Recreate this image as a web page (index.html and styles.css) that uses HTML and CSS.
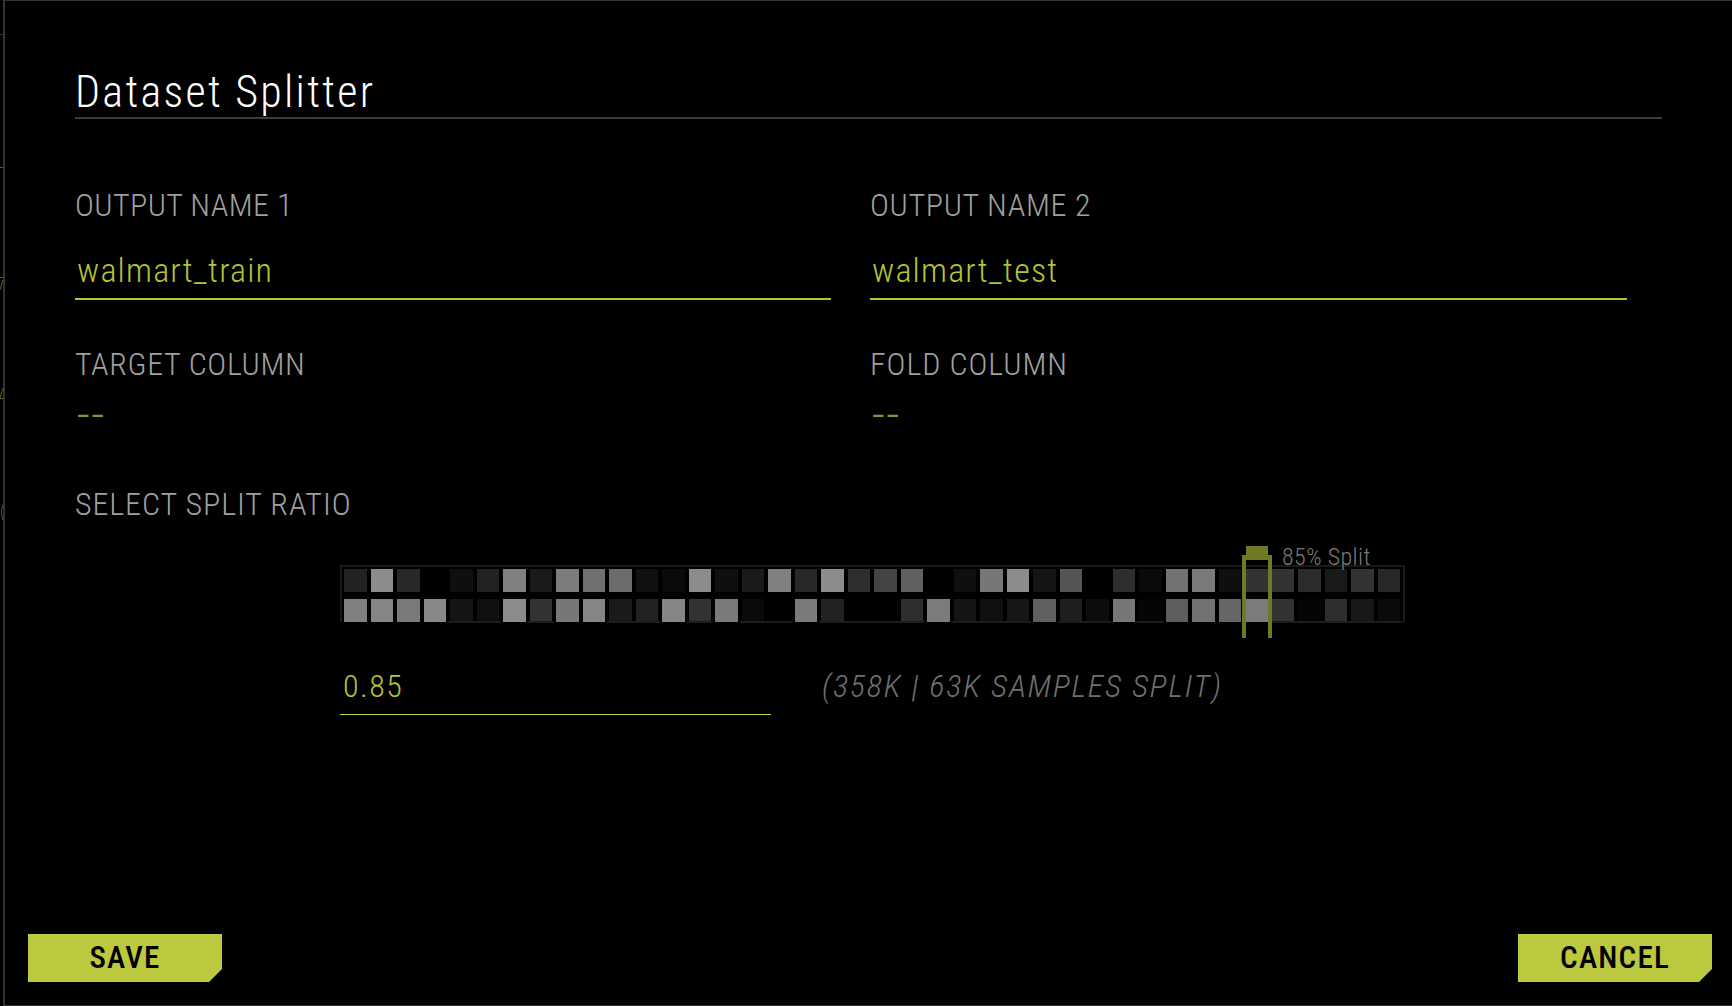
FILE: index.html
```html
<!DOCTYPE html>
<html lang="en">
<head>
<meta charset="utf-8">
<title>Dataset Splitter</title>
<link rel="stylesheet" href="styles.css">
</head>
<body>
<svg class="sliver" width="3" height="530" viewBox="0 0 3 530" aria-hidden="true">
  <path class="sliver-grey" d="M0 34.5H3"/>
  <path class="sliver-olive" d="M0 167.5H3M0 277.5H3M0 290L3 280M0 398.5H3M0 398L3 388M3 505C1 510 1 515 3 520"/>
</svg>
<main class="modal">
  <h1 class="title">Dataset Splitter</h1>
  <div class="fields">
    <div class="field">
      <div class="label label-tight">OUTPUT NAME 1</div>
      <div class="value underlined">walmart_train</div>
    </div>
    <div class="field">
      <div class="label">OUTPUT NAME 2</div>
      <div class="value underlined">walmart_test</div>
    </div>
    <div class="field">
      <div class="label">TARGET COLUMN</div>
      <div class="value dim">--</div>
    </div>
    <div class="field">
      <div class="label label-wide">FOLD COLUMN</div>
      <div class="value dim">--</div>
    </div>
  </div>
  <div class="label label-wide ratio-label">SELECT SPLIT RATIO</div>
  <section class="splitter">
    <div class="heat">
      <div class="heat-row" id="r1"></div>
      <div class="heat-row" id="r2"></div>
      <div class="handle"><span class="knob"></span></div>
      <span class="split-tag">85% Split</span>
    </div>
    <div class="ratio-row">
      <div class="ratio-input">0.85</div>
      <div class="samples">(358K | 63K SAMPLES SPLIT)</div>
    </div>
  </section>
  <footer class="actions">
    <button class="btn">SAVE</button>
    <button class="btn">CANCEL</button>
  </footer>
</main>
<script src="app.js"></script>
</body>
</html>
```
FILE: styles.css
```css
* { box-sizing: border-box; }
html, body { margin: 0; height: 100%; background: #000; }
body { font-family: Roboto, "Liberation Sans", sans-serif; font-stretch: 75%; overflow: hidden; }
.sliver { position: absolute; left: 0; top: 0; }
.sliver path { fill: none; stroke-width: 1; }
.sliver-grey { stroke: #333; }
.sliver-olive { stroke: #5a6320; }
.modal {
  height: 1006px;
  margin-left: 3px;
  border: solid #333;
  border-width: 1px 0 1px 2px;
  padding: 0 0 23px 23px;
  display: flex;
  flex-direction: column;
}
.title {
  margin: 0 70px 0 47px;
  height: 118px;
  padding-top: 66px;
  border-bottom: 2px solid #3c3c3c;
  font-size: 44px;
  line-height: 50px;
  font-weight: 300;
  letter-spacing: 2.3px;
  color: #fff;
}
.fields {
  margin: 0 0 0 47px;
  padding-top: 67px;
  width: 1552px;
  display: grid;
  grid-template-columns: 756px 757px;
  column-gap: 39px;
}
.field { min-height: 159px; }
.label {
  font-size: 32px;
  line-height: 38px;
  font-weight: 300;
  letter-spacing: 0.65px;
  color: #a0a0a0;
}
.label-tight { letter-spacing: 0.4px; }
.label-wide { letter-spacing: 0.92px; }
.value {
  margin-top: 24px;
  height: 52px;
  padding-left: 2px;
  font-size: 34px;
  line-height: 44px;
  font-weight: 300;
  letter-spacing: 1.2px;
  color: #b5c334;
}
.underlined { border-bottom: 2px solid #b5c334; }
.dim {
  margin-top: 10px;
  font-size: 44px;
  font-weight: 300;
  font-stretch: 100%;
  letter-spacing: 2px;
  color: #8b9530;
}
.ratio-label { margin-left: 47px; margin-top: -19px; }
.splitter { margin: 42px 0 0 312px; width: 1100px; }
.heat {
  position: relative;
  width: 1065px;
  height: 57px;
  border: solid #191919;
  border-width: 2px 2px 0;
  padding: 2px 2px 0;
}
.heat-row { display: flex; gap: 4px; margin-bottom: 7.5px; }
.cell { position: relative; flex: 0 0 22.5px; height: 22.5px; }
.cell.low::after {
  content: "";
  position: absolute;
  left: -2px; right: -2px; bottom: -1px;
  height: 2px;
  background: #1c1c1c;
}
.handle {
  position: absolute;
  left: 900px; top: -12px;
  width: 30px; height: 83px;
  border: solid #6f7a22;
  border-width: 5px 4px 0;
}
.knob {
  position: absolute;
  left: 0; right: 0; top: -14px;
  height: 14px;
  background: #6f7a22;
}
.split-tag {
  position: absolute;
  left: 940px; top: -24px;
  font-size: 24px;
  line-height: 28px;
  font-weight: 300;
  letter-spacing: 0.4px;
  color: #7a7a7a;
}
.ratio-row { display: flex; margin-top: 45px; align-items: flex-start; }
.ratio-input {
  width: 431px;
  height: 48px;
  padding-left: 3px;
  border-bottom: 1px solid #c4d13c;
  font-size: 32px;
  line-height: 38px;
  font-weight: 300;
  letter-spacing: 1.5px;
  color: #b5c334;
}
.samples {
  margin-left: 51px;
  font-size: 32px;
  line-height: 38px;
  font-weight: 300;
  font-style: italic;
  letter-spacing: 1.85px;
  color: #707070;
}
.actions {
  margin-top: auto;
  display: flex;
  justify-content: space-between;
  padding-right: 20px;
}
.btn {
  width: 194px;
  height: 48px;
  border: 0;
  padding: 0;
  background: #bcc83e;
  clip-path: polygon(0 0, 100% 0, 100% 35px, 181px 100%, 0 100%);
  font: 500 31px/48px Roboto, sans-serif;
  font-stretch: 75%;
  letter-spacing: 1.2px;
  color: #000;
}
```
FILE: app.js
```js
var rows = {
  r1: [0x22,0x8c,0x28,0,0x0f,0x22,0x80,0x1a,0x7c,0x70,0x6c,0x11,0x0a,0x8c,0x0f,0x1a,0x80,0x28,0x8c,0x2e,0x44,0x60,0,0x0f,0x77,0x8c,0x15,0x55,0,0x2e,0x0a,0x72,0x7a,0x0f,0x33,0x33,0x2c,0x1a,0x33,0x28],
  r2: [0x80,0x85,0x7a,0x88,0x15,0x10,0x8c,0x33,0x77,0x85,0x1a,0x22,0x85,0x33,0x7a,0x0a,0,0x7a,0x22,0,0,0x2e,0x7c,0x15,0x10,0x16,0x60,0x1f,0x0c,0x77,0x05,0x5e,0x72,0x66,0x7c,0x33,0x05,0x2e,0x18,0x0a]
};
Object.keys(rows).forEach(function (id) {
  var row = document.getElementById(id);
  rows[id].forEach(function (v) {
    var c = document.createElement('span');
    c.className = 'cell' + (id === 'r2' && v < 0x40 ? ' low' : '');
    c.style.backgroundColor = 'rgb(' + v + ',' + v + ',' + v + ')';
    row.appendChild(c);
  });
});
```
